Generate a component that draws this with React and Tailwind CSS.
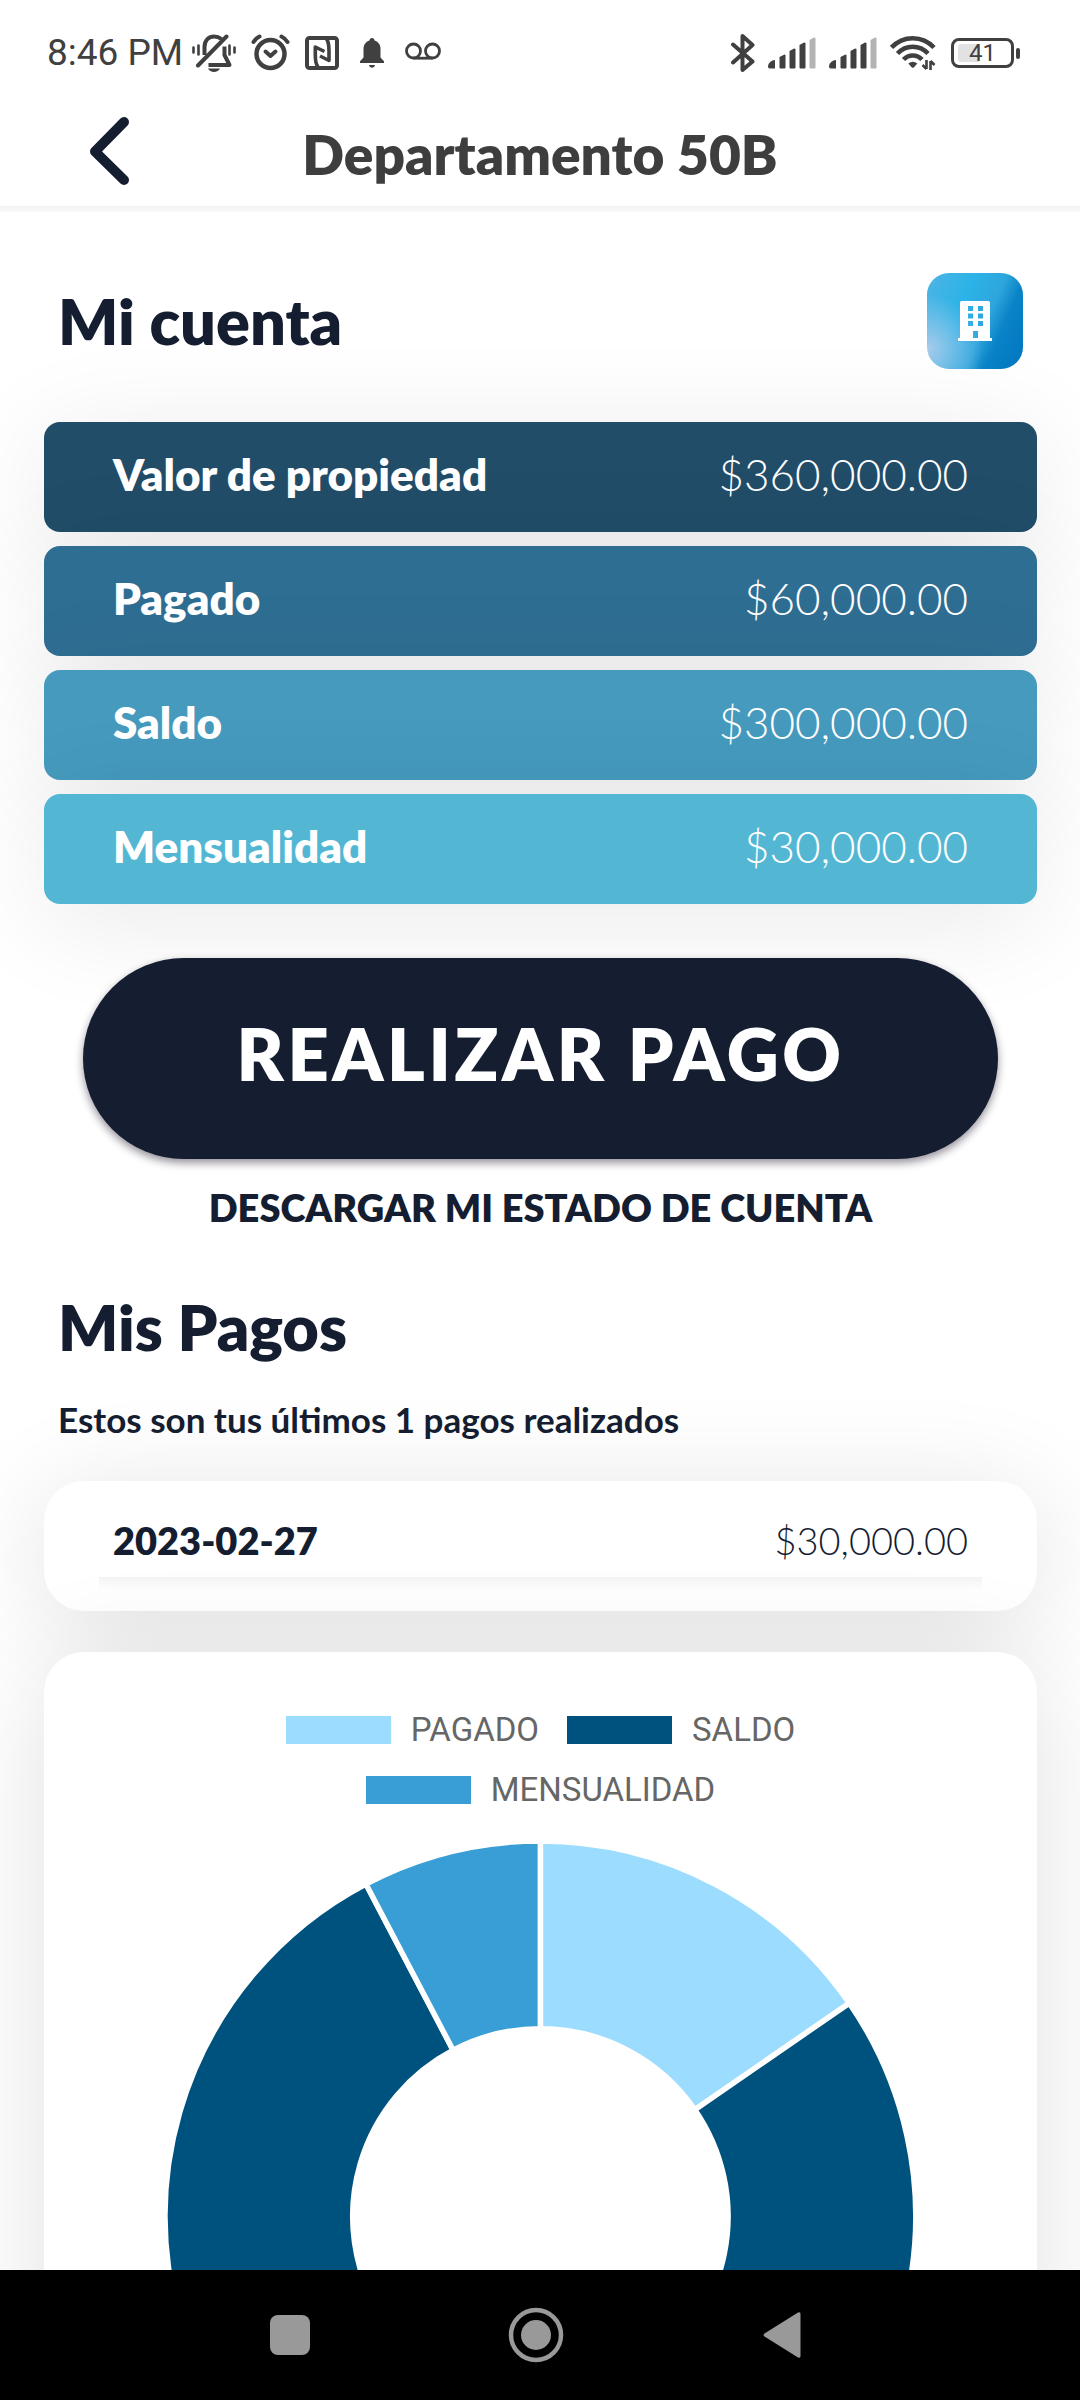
const accountRows = [
  { label: "Valor de propiedad", value: "$360,000.00", tone: "bg-[#214d69]" },
  { label: "Pagado", value: "$60,000.00", tone: "bg-[#2f6e93]" },
  { label: "Saldo", value: "$300,000.00", tone: "bg-[#459abd]" },
  { label: "Mensualidad", value: "$30,000.00", tone: "bg-[#53b7d4]" },
];

const payments = [{ date: "2023-02-27", amount: "$30,000.00" }];

const slices = [
  { label: "PAGADO", value: 60, swatch: "bg-[#9cdcff]", fill: "fill-[#9cdcff]" },
  { label: "SALDO", value: 300, swatch: "bg-[#00527e]", fill: "fill-[#00527e]" },
  { label: "MENSUALIDAD", value: 30, swatch: "bg-[#389ed5]", fill: "fill-[#389ed5]" },
];

function VibrateOffIcon() {
  return (
    <svg width="44" height="38" viewBox="0 0 44 38" fill="none" stroke="currentColor" strokeWidth="4" strokeLinecap="round" strokeLinejoin="round">
      <path d="M1.5 13.5v5M6.5 11.5v9M37.5 11.5v9M42.5 13.5v5" strokeWidth="2.6" />
      <path d="M12.5 21V13C12.5 6 17 2.5 22 2.5c3 0 5.500 1 7.500 2.500" strokeLinecap="butt" />
      <path d="M34.500 2.500 6 31.500" />
      <path d="M32.500 12.500V21L37.500 31H16.500" strokeLinecap="butt" />
      <path d="M16 34.500h12c-2 4.500-10 4.500-12 0z" fill="currentColor" stroke="none" />
    </svg>
  );
}

function AlarmIcon() {
  return (
    <svg width="39" height="38" viewBox="0 0 39 38" fill="none" stroke="currentColor" strokeWidth="4" strokeLinecap="round" strokeLinejoin="round">
      <circle cx="19.500" cy="20" r="14" strokeWidth="4.500" />
      <path d="M14.500 17.500l5 4.500 5-4.500" />
      <path d="M2.500 8Q4.500 4.500 8.500 2.500M36.500 8Q34.500 4.500 30.500 2.500" />
    </svg>
  );
}

function NfcIcon() {
  return (
    <svg width="34" height="34" viewBox="0 0 34 34" fill="none" stroke="currentColor" strokeWidth="3.600" strokeLinejoin="round">
      <rect x="2" y="2" width="30" height="30" rx="2.500" strokeWidth="4" />
      <path d="M13 31C10.500 28 10.300 24 10.300 19V11L19.500 15.500" />
      <path d="M21.500 3C24 6 24 10 24 15V24.500L15 20" />
    </svg>
  );
}

function BellIcon() {
  return (
    <svg width="36" height="32" viewBox="0 0 36 32" fill="currentColor">
      <path d="M18 1c1.500 0 2.500 1 2.500 2.500 4 1.200 6 4.500 6 8.500v8.500l3.500 3.800V26H6v-1.700l3.500-3.800V12c0-4 2-7.300 6-8.500C15.500 2 16.500 1 18 1z" />
      <path d="M15 28h6c-.6 3.500-5.400 3.500-6 0z" />
    </svg>
  );
}

function VoicemailIcon() {
  return (
    <svg width="36" height="22" viewBox="0 0 36 22" fill="none" stroke="currentColor" strokeWidth="2.800">
      <circle cx="8.500" cy="9" r="7" />
      <circle cx="27.500" cy="9" r="7" />
      <path d="M8.500 16.200h19" />
    </svg>
  );
}

function BluetoothIcon() {
  return (
    <svg width="24" height="40" viewBox="0 0 24 40" fill="none" stroke="currentColor" strokeWidth="4" strokeLinecap="round" strokeLinejoin="round">
      <path d="M2 11.500 21.500 28.500 11.500 37V3L21.500 12 2 29.500" />
    </svg>
  );
}

function SignalIcon() {
  return (
    <svg width="48" height="32" viewBox="0 0 48 32" fill="currentColor">
      <path d="M0 29.500c0-3.500 3.500-6.500 7-6.500v8.500H2c-1.500 0-2-1-2-2z" />
      <path d="M11.500 20l5-2.500q1 0 1 1v12q0 1-1 1h-4q-1 0-1-1z" />
      <path d="M21.500 14l4.500-2.500q1.500 0 1.500 1v18q0 1-1 1h-4q-1 0-1-1z" />
      <path d="M31.500 8l4.500-2.500q1.500 0 1.500 1v24q0 1-1 1h-4q-1 0-1-1z" />
      <path d="M41.500 3l4.500-2.500q1.500 0 1.500 1v29q0 1-1 1h-4q-1 0-1-1z" className="fill-[#b3b3b3]" />
    </svg>
  );
}

function WifiIcon() {
  return (
    <svg width="48" height="36" viewBox="0 0 48 36" fill="none" stroke="currentColor" strokeWidth="4.500">
      <path d="M1.500 12.500C13 0 32.500 0 44 12.500" />
      <path d="M7.500 18.500C16 9.500 29.500 9.500 38 18.500" />
      <path d="M13.500 24.500C18.500 19 27 19 32 24.500" />
      <path d="M18.300 28.500q4.500-3.500 9 0L24 32.200q-1.200 1-2.400 0z" fill="currentColor" stroke="none" />
      <path d="M36.500 25v9M36.500 34l-4-4M40.500 35v-9M40.500 26l4 4" strokeWidth="2.600" />
    </svg>
  );
}

function Battery({ level }) {
  return (
    <div className="flex items-center gap-0.5" aria-label={`Batería ${level}%`}>
      <div className="relative flex h-[30px] w-[63px] items-center justify-center rounded-[8px] border-3 border-current">
        <span className="absolute inset-y-[3px] left-[4px] w-[38%] rounded-[3px] bg-[#e2e2e2]" />
        <span className="relative font-[Roboto] text-[24px] leading-none">{level}</span>
      </div>
      <span className="h-[11px] w-1 rounded-[2px] bg-current" />
    </div>
  );
}

function StatusBar() {
  return (
    <div className="flex items-center justify-between pt-[33px] pr-[60px] pl-[47px] text-[#404040]">
      <div className="flex items-center gap-[15px]">
        <span className="-mr-1.5 font-[Roboto] text-[37px] leading-[40px]">8:46 PM</span>
        <VibrateOffIcon />
        <AlarmIcon />
        <NfcIcon />
        <BellIcon />
        <VoicemailIcon />
      </div>
      <div className="flex items-center gap-[13px]">
        <BluetoothIcon />
        <SignalIcon />
        <SignalIcon />
        <WifiIcon />
        <Battery level={41} />
      </div>
    </div>
  );
}

function Header() {
  return (
    <header className="shrink-0">
      <StatusBar />
      <div className="grid grid-cols-[1fr_auto_1fr] items-center px-[90px] pt-[34px] pb-[11px]">
        <button type="button" aria-label="Volver" className="w-fit pt-[10px] pb-[10px] text-[#151d30]">
          <svg width="39" height="68" viewBox="0 0 39 68" fill="none" stroke="currentColor" strokeWidth="10" strokeLinecap="round" strokeLinejoin="round">
            <path d="M34 5 5 34.500 34 63" />
          </svg>
        </button>
        <h1 className="pt-1.5 text-[55px] leading-[68px] font-extrabold text-[#3e3e3e]">Departamento 50B</h1>
      </div>
      <div className="h-1.5 bg-linear-to-b from-[#f2f2f2] to-[#fbfbfb]" />
    </header>
  );
}

function BuildingBadge() {
  return (
    <div className="flex size-24 items-center justify-center rounded-[22px] bg-[radial-gradient(circle_at_0%_80%,#a9cbeb_0%,#a9cbeb00_45%),linear-gradient(114deg,#4fb4e3_0%,#2bb3e7_35%,#2ea6dd_58%,#0a83c8_72%,#0076bf_100%)]">
      <svg width="34" height="40" viewBox="0 0 34 40" fill="#fff" fillRule="evenodd">
        <path d="M3.500 0h27q1.500 0 1.500 1.500V37h2v3H0v-3h2V1.500Q2 0 3.500 0zM10 5v5h5V5zM20 5v5h5V5zM10 12.500v5h5v-5zM20 12.500v5h5v-5zM10 20v5h5v-5zM20 20v5h5v-5zM15 30v7h5v-7z" />
      </svg>
    </div>
  );
}

function Donut() {
  const center = 373;
  const outer = 376;
  const inner = 188;
  const total = slices.reduce((sum, slice) => sum + slice.value, 0);
  const point = (radius, share) => {
    const angle = share * 2 * Math.PI;
    return `${center + radius * Math.sin(angle)} ${center - radius * Math.cos(angle)}`;
  };
  let start = 0;
  const paths = slices.map((slice) => {
    const end = start + slice.value / total;
    const large = end - start > 0.5 ? 1 : 0;
    const d = `M${point(outer, start)}A${outer} ${outer} 0 ${large} 1 ${point(outer, end)}L${point(inner, end)}A${inner} ${inner} 0 ${large} 0 ${point(inner, start)}Z`;
    start = end;
    return { ...slice, d };
  });
  return (
    <svg viewBox="0 0 746 746" className="mx-auto mt-5 block w-3/4 overflow-visible" role="img" aria-label="Pagado, saldo y mensualidad">
      {paths.map((slice) => (
        <path key={slice.label} d={slice.d} className={slice.fill} stroke="#fff" strokeWidth="5.500" />
      ))}
    </svg>
  );
}

function NavBar() {
  return (
    <nav className="flex h-[130px] shrink-0 items-center justify-center gap-[146px] bg-black pr-2 text-[#999]">
      <button type="button" aria-label="Recientes" className="flex size-[100px] items-center justify-center">
        <span className="size-10 rounded-[8px] bg-current" />
      </button>
      <button type="button" aria-label="Inicio" className="flex size-[100px] items-center justify-center">
        <svg width="56" height="56" viewBox="0 0 56 56" fill="none">
          <circle cx="28" cy="28" r="25" stroke="currentColor" strokeWidth="4.500" />
          <circle cx="28" cy="28" r="15" fill="currentColor" />
        </svg>
      </button>
      <button type="button" aria-label="Atrás" className="flex size-[100px] items-center justify-center">
        <svg width="38" height="46" viewBox="0 0 38 46" fill="currentColor">
          <path d="M35 .6Q37.500-.4 37.500 2v42q0 2.400-2.500 1.400L1.500 24.500q-2-1.500 0-3z" />
        </svg>
      </button>
    </nav>
  );
}

export default function App() {
  return (
    <div className="flex h-screen flex-col overflow-hidden bg-white font-['Lato',sans-serif] text-[#151d30]">
      <Header />
      <main className="flex-1 overflow-hidden pt-[61px] pr-[43px] pl-[44px]">
        <section>
          <div className="flex items-center justify-between px-3.5">
            <h2 className="text-[63px] leading-[80px] font-extrabold">Mi cuenta</h2>
            <BuildingBadge />
          </div>
          <dl className="mt-[53px] flex flex-col gap-[14px]">
            {accountRows.map((row) => (
              <div
                key={row.label}
                className={`flex h-[110px] items-center justify-between rounded-[16px] px-[69px] pb-1.5 text-[44px] text-white shadow-[0_16px_110px_rgba(0,0,0,0.09)] ${row.tone}`}
              >
                <dt className="font-extrabold">{row.label}</dt>
                <dd className="font-light">{row.value}</dd>
              </div>
            ))}
          </dl>
          <div className="mt-[54px] px-[39px]">
            <button
              type="button"
              className="relative h-[201px] w-full rounded-full bg-[#151d30] pb-3 text-[72px] font-extrabold tracking-wider text-white shadow-[0_4px_8px_rgba(21,10,30,0.45)]"
            >
              REALIZAR PAGO
            </button>
          </div>
          <a href="#estado" className="mt-6 block text-center text-[38px] leading-[48px] font-extrabold">
            DESCARGAR MI ESTADO DE CUENTA
          </a>
        </section>

        <section>
          <h2 className="mt-14 px-3.5 text-[63px] leading-[80px] font-extrabold">Mis Pagos</h2>
          <p className="mt-7 px-3.5 text-[35px] leading-[48px] font-bold">
            Estos son tus últimos {payments.length} pagos realizados
          </p>
          <ul className="mt-[38px] rounded-[40px] bg-white px-[55px] pt-[34px] pb-5 shadow-[0_16px_110px_rgba(0,0,0,0.12)]">
            {payments.map((payment) => (
              <li key={payment.date}>
                <div className="flex justify-between px-3.5 pb-3 text-[38px] leading-[50px]">
                  <span className="font-extrabold">{payment.date}</span>
                  <span className="font-light">{payment.amount}</span>
                </div>
                <div className="h-3.5 bg-linear-to-b from-[#f4f4f4] to-white" />
              </li>
            ))}
          </ul>
          <div className="mt-[41px] rounded-[40px] bg-white px-[60px] pt-12 pb-10 shadow-[0_16px_110px_rgba(0,0,0,0.12)]">
            <ul className="flex flex-wrap justify-center gap-x-7 font-[Roboto] text-[33px] leading-[60px] text-[#666]">
              {slices.map((slice) => (
                <li key={slice.label} className="flex items-center gap-5">
                  <span className={`h-7 w-[105px] ${slice.swatch}`} />
                  {slice.label}
                </li>
              ))}
            </ul>
            <div className="-mx-[60px] pt-1">
              <Donut />
            </div>
          </div>
        </section>
      </main>
      <NavBar />
    </div>
  );
}
